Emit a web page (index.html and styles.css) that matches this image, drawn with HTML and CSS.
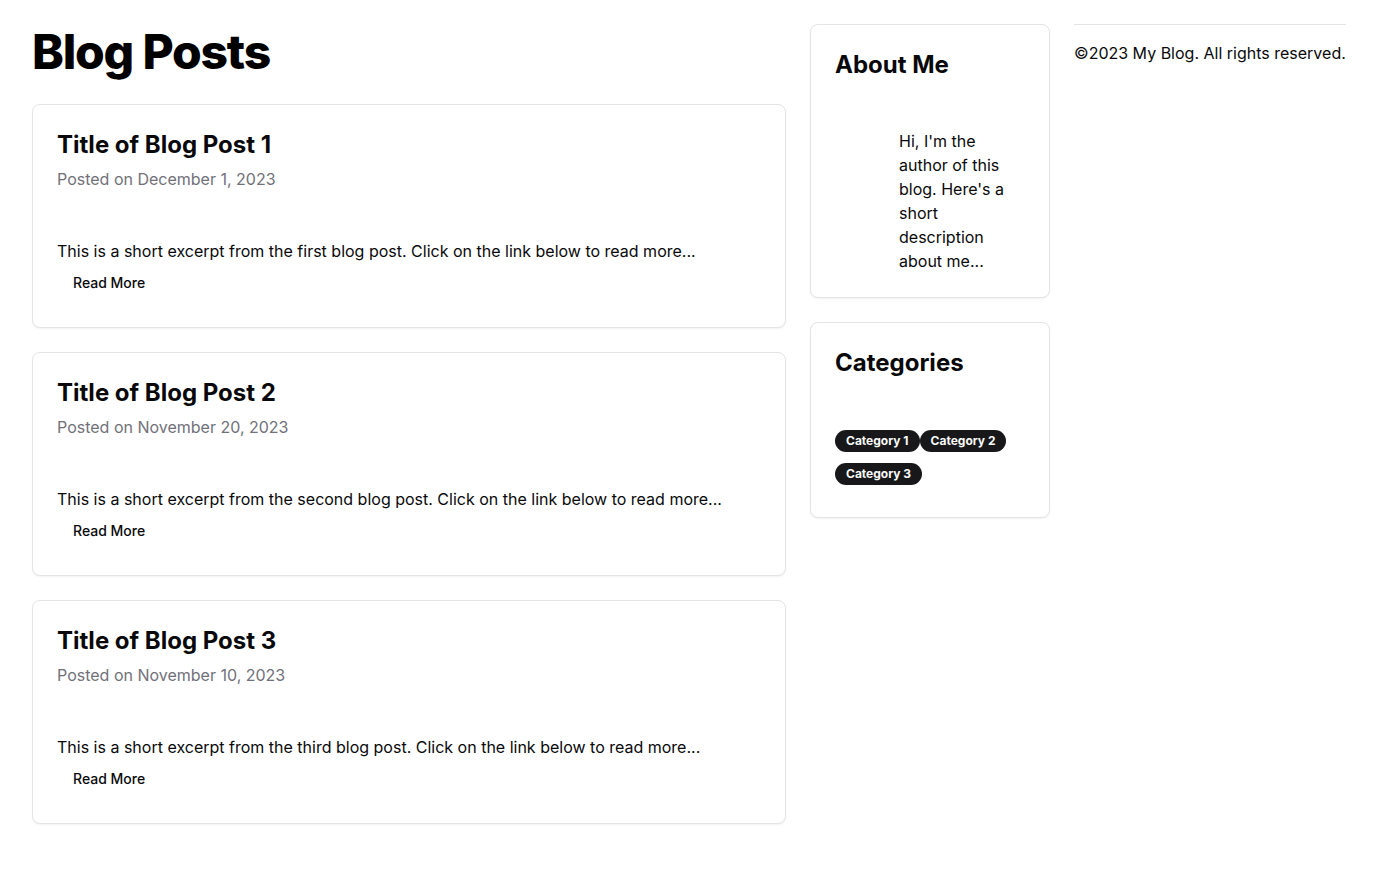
FILE: index.html
```html
<!DOCTYPE html>
<html lang="en">
<head>
<meta charset="utf-8">
<title>Blog</title>
<link rel="stylesheet" href="styles.css">
</head>
<body>
<div class="page">
  <main class="main">
    <h1 class="page-title">Blog Posts</h1>
    <div class="posts">
      <article class="card">
        <div class="card-header">
          <h2 class="card-title">Title of Blog Post 1</h2>
          <p class="card-meta">Posted on December 1, 2023</p>
        </div>
        <div class="card-content">
          <p class="excerpt">This is a short excerpt from the first blog post. Click on the link below to read more...</p>
          <a class="btn-ghost" href="#">Read More</a>
        </div>
      </article>
      <article class="card">
        <div class="card-header">
          <h2 class="card-title">Title of Blog Post 2</h2>
          <p class="card-meta">Posted on November 20, 2023</p>
        </div>
        <div class="card-content">
          <p class="excerpt">This is a short excerpt from the second blog post. Click on the link below to read more...</p>
          <a class="btn-ghost" href="#">Read More</a>
        </div>
      </article>
      <article class="card">
        <div class="card-header">
          <h2 class="card-title">Title of Blog Post 3</h2>
          <p class="card-meta">Posted on November 10, 2023</p>
        </div>
        <div class="card-content">
          <p class="excerpt">This is a short excerpt from the third blog post. Click on the link below to read more...</p>
          <a class="btn-ghost" href="#">Read More</a>
        </div>
      </article>
    </div>
  </main>
  <aside class="sidebar">
    <section class="card">
      <div class="card-header">
        <h2 class="card-title">About Me</h2>
      </div>
      <div class="card-content about">
        <div class="avatar"></div>
        <p class="about-text">Hi, I'm the author of this blog. Here's a short description about me...</p>
      </div>
    </section>
    <section class="card">
      <div class="card-header">
        <h2 class="card-title">Categories</h2>
      </div>
      <div class="card-content badges"><span class="badge">Category 1</span><span class="badge">Category 2</span><span class="badge">Category 3</span></div>
    </section>
  </aside>
  <footer class="footer">
    <p class="footer-text">©2023 My Blog. All rights reserved.</p>
  </footer>
</div>
</body>
</html>
```
FILE: styles.css
```css
* { box-sizing: border-box; }
html, body { margin: 0; padding: 0; background: #ffffff; }
body {
  font-family: Inter, "Noto Sans", sans-serif;
  color: #09090b;
  font-size: 16px;
  line-height: 24px;
}
p, h1, h2 { margin: 0; }

.page {
  display: flex;
  align-items: flex-start;
  gap: 24px;
  padding: 24px 32px;
}
.main { width: 754px; flex: none; }
.page-title {
  font-size: 48px;
  line-height: 56px;
  font-weight: 800;
  letter-spacing: -0.025em;
  color: #000;
  margin-bottom: 24px;
}
.posts { display: flex; flex-direction: column; gap: 24px; }

.card {
  border: 1px solid #e4e4e7;
  border-radius: 8px;
  background: #fff;
  box-shadow: 0 1px 2px rgba(0,0,0,0.05);
}
.card-header { padding: 24px; display: flex; flex-direction: column; gap: 6px; }
.card-title {
  font-size: 24px;
  line-height: 32px;
  font-weight: 700;
  color: #09090b;
}
.card-meta { color: #71717a; font-size: 16px; line-height: 24px; }
.card-content { padding: 24px; }
.excerpt { color: #09090b; }
.btn-ghost {
  display: inline-flex;
  align-items: center;
  height: 40px;
  padding: 0 16px;
  font-size: 14px;
  font-weight: 500;
  color: #09090b;
  text-decoration: none;
  border-radius: 6px;
}

.sidebar { width: 240px; flex: none; display: flex; flex-direction: column; gap: 24px; }
.about { display: flex; gap: 16px; }
.avatar { width: 48px; height: 48px; flex: none; }
.about-text { color: #09090b; }

.badges { line-height: 24px; }
.badge {
  display: inline-flex;
  align-items: center;
  border: 1px solid transparent;
  border-radius: 9999px;
  background: #18181b;
  color: #fafafa;
  font-size: 12px;
  line-height: 16px;
  font-weight: 700;
  padding: 2px 10px;
  margin-bottom: 8px;
}

.footer { flex: none; border-top: 1px solid #e4e4e7; padding-top: 16px; }
.footer-text { color: #09090b; white-space: nowrap; }
```
